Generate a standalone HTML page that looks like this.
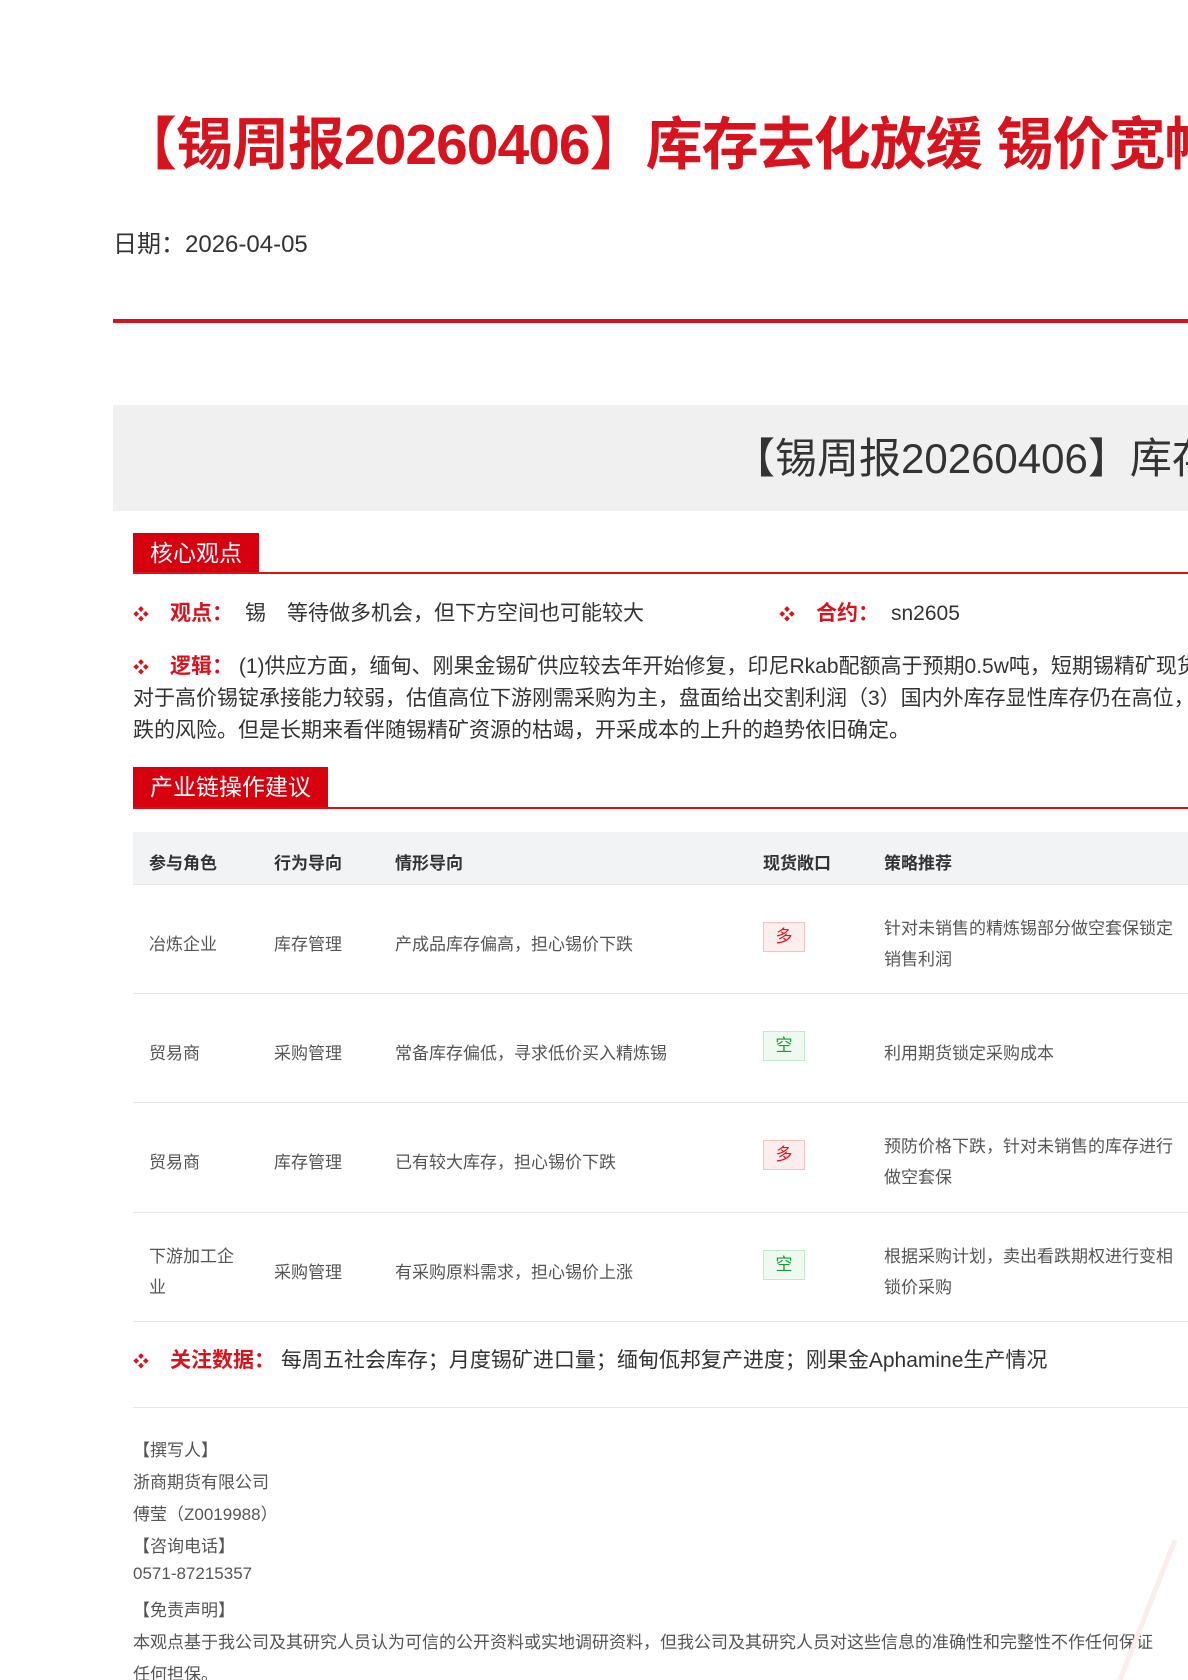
<!DOCTYPE html>
<html><head><meta charset="utf-8"><style>
html,body{margin:0;padding:0;width:1188px;height:1680px;overflow:hidden;background:#fff;}
body{position:relative;font-family:"Liberation Sans","Noto Sans CJK SC",sans-serif;color:#333;}
.a{position:absolute;white-space:nowrap;}
.red{color:#d7141e;}
.b{color:#d7141e;font-size:16px;}
.hdr{position:absolute;left:133px;background:#d7000f;color:#fff;font-size:23px;line-height:40px;padding:0 17px;}
.hl{position:absolute;left:133px;right:0;height:2px;background:#d7141e;}
.td{position:absolute;font-size:17px;color:#555;white-space:nowrap;}
.sep{position:absolute;left:133px;right:0;height:1px;background:#e6e8eb;}
.tag{position:absolute;left:763px;width:40px;height:28px;font-size:17px;text-align:center;line-height:28px;}
.duo{background:#fdeeee;border:1px solid #f5c2c2;color:#e0141e;}
.kong{background:#eef9f0;border:1px solid #c2e8cb;color:#1a9a3a;}
.f{position:absolute;left:133px;font-size:17px;color:#555;white-space:nowrap;}
</style></head><body>
<div class="a" style="left:120px;top:110px;font-size:57px;font-weight:bold;color:#d7141e;line-height:70px;letter-spacing:-1px;">【锡周报20260406】库存去化放缓 锡价宽幅震荡</div>
<div class="a" style="left:113px;top:224px;font-size:24px;color:#333;">日期：2026-04-05</div>
<div style="position:absolute;left:113px;right:0;top:319px;height:4px;background:#d7141e;"></div>
<div style="position:absolute;left:113px;right:0;top:405px;height:106px;background:#f0f0f0;"></div>
<div class="a" style="left:733px;top:434px;font-size:42px;color:#333;line-height:50px;">【锡周报20260406】库存去化放缓 锡价宽幅震荡</div>

<div class="hdr" style="top:533px;">核心观点</div>
<div class="hl" style="top:572px;"></div>

<div class="a" style="left:133px;top:601px;font-size:21px;line-height:26px;"><span class="b">❖</span></div>
<div class="a" style="left:170px;top:601px;font-size:21px;line-height:26px;"><b class="red">观点：</b></div>
<div class="a" style="left:245px;top:601px;font-size:21px;line-height:26px;">锡</div>
<div class="a" style="left:287px;top:601px;font-size:21px;line-height:26px;">等待做多机会，但下方空间也可能较大</div>
<div class="a" style="left:779px;top:601px;font-size:21px;line-height:26px;"><span class="b">❖</span></div>
<div class="a" style="left:816px;top:601px;font-size:21px;line-height:26px;"><b class="red">合约：</b></div>
<div class="a" style="left:891px;top:601px;font-size:21px;line-height:26px;">sn2605</div>

<div class="a" style="left:133px;top:654px;font-size:21px;line-height:26px;"><span class="b">❖</span></div>
<div class="a" style="left:170px;top:654px;font-size:21px;line-height:26px;"><b class="red">逻辑：</b> (1)供应方面，缅甸、刚果金锡矿供应较去年开始修复，印尼Rkab配额高于预期0.5w吨，短期锡精矿现货偏紧</div>
<div class="a" style="left:133px;top:686px;font-size:21px;line-height:26px;">对于高价锡锭承接能力较弱，估值高位下游刚需采购为主，盘面给出交割利润（3）国内外库存显性库存仍在高位，存在下</div>
<div class="a" style="left:133px;top:718px;font-size:21px;line-height:26px;">跌的风险。但是长期来看伴随锡精矿资源的枯竭，开采成本的上升的趋势依旧确定。</div>

<div class="hdr" style="top:767px;">产业链操作建议</div>
<div class="hl" style="top:807px;"></div>

<div style="position:absolute;left:133px;right:0;top:832px;height:52px;background:#f2f3f5;border-bottom:1px solid #e6e8eb;"></div>
<div class="td" style="left:149px;top:849px;font-weight:bold;color:#333;">参与角色</div>
<div class="td" style="left:274px;top:849px;font-weight:bold;color:#333;">行为导向</div>
<div class="td" style="left:395px;top:849px;font-weight:bold;color:#333;">情形导向</div>
<div class="td" style="left:763px;top:849px;font-weight:bold;color:#333;">现货敞口</div>
<div class="td" style="left:884px;top:849px;font-weight:bold;color:#333;">策略推荐</div>

<div class="td" style="left:149px;top:930px;">冶炼企业</div>
<div class="td" style="left:274px;top:930px;">库存管理</div>
<div class="td" style="left:395px;top:930px;">产成品库存偏高，担心锡价下跌</div>
<div class="tag duo" style="top:922px;">多</div>
<div class="td" style="left:884px;top:914px;">针对未销售的精炼锡部分做空套保锁定</div>
<div class="td" style="left:884px;top:945px;">销售利润</div>
<div class="sep" style="top:993px;"></div>

<div class="td" style="left:149px;top:1039px;">贸易商</div>
<div class="td" style="left:274px;top:1039px;">采购管理</div>
<div class="td" style="left:395px;top:1039px;">常备库存偏低，寻求低价买入精炼锡</div>
<div class="tag kong" style="top:1031px;">空</div>
<div class="td" style="left:884px;top:1039px;">利用期货锁定采购成本</div>
<div class="sep" style="top:1102px;"></div>

<div class="td" style="left:149px;top:1148px;">贸易商</div>
<div class="td" style="left:274px;top:1148px;">库存管理</div>
<div class="td" style="left:395px;top:1148px;">已有较大库存，担心锡价下跌</div>
<div class="tag duo" style="top:1140px;">多</div>
<div class="td" style="left:884px;top:1132px;">预防价格下跌，针对未销售的库存进行</div>
<div class="td" style="left:884px;top:1163px;">做空套保</div>
<div class="sep" style="top:1212px;"></div>

<div class="td" style="left:149px;top:1242px;">下游加工企</div>
<div class="td" style="left:149px;top:1273px;">业</div>
<div class="td" style="left:274px;top:1258px;">采购管理</div>
<div class="td" style="left:395px;top:1258px;">有采购原料需求，担心锡价上涨</div>
<div class="tag kong" style="top:1250px;">空</div>
<div class="td" style="left:884px;top:1242px;">根据采购计划，卖出看跌期权进行变相</div>
<div class="td" style="left:884px;top:1273px;">锁价采购</div>
<div class="sep" style="top:1321px;"></div>

<div class="a" style="left:133px;top:1348px;font-size:21px;line-height:26px;"><span class="b">❖</span></div>
<div class="a" style="left:170px;top:1348px;font-size:21px;line-height:26px;"><b class="red">关注数据：</b> 每周五社会库存；月度锡矿进口量；缅甸佤邦复产进度；刚果金Aphamine生产情况</div>
<div class="sep" style="top:1407px;"></div>

<div class="f" style="top:1436px;">【撰写人】</div>
<div class="f" style="top:1468px;">浙商期货有限公司</div>
<div class="f" style="top:1500px;">傅莹（Z0019988）</div>
<div class="f" style="top:1532px;">【咨询电话】</div>
<div class="f" style="top:1564px;">0571-87215357</div>
<div class="f" style="top:1596px;">【免责声明】</div>
<div class="f" style="top:1628px;">本观点基于我公司及其研究人员认为可信的公开资料或实地调研资料，但我公司及其研究人员对这些信息的准确性和完整性不作任何保证</div>
<div class="f" style="top:1660px;">任何担保。</div>

<svg style="position:absolute;left:1000px;top:1520px;" width="188" height="160"><path d="M175 20 L120 160" stroke="#fcecec" stroke-width="5" fill="none"/></svg>
</body></html>
